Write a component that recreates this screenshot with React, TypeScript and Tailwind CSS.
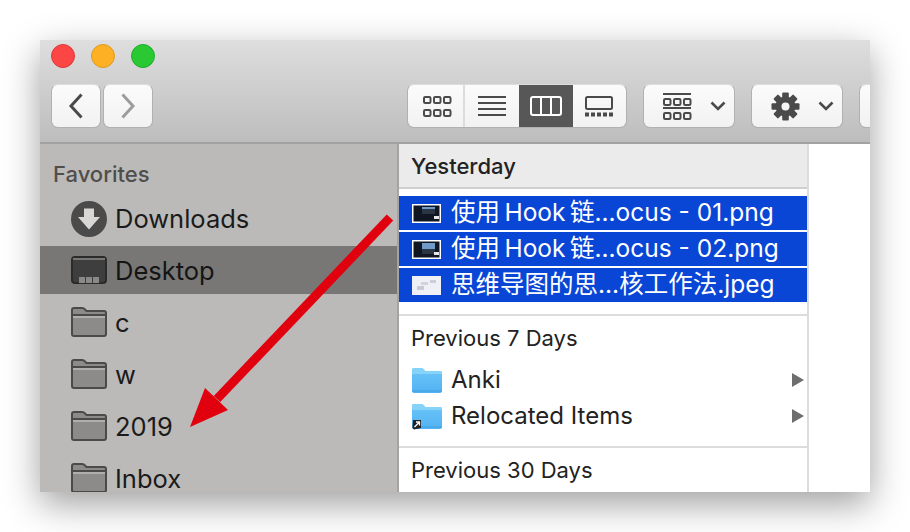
import React from "react";

function Light({ c, b }: { c: string; b: string }) {
  return <div className={`w-6 h-6 rounded-full border ${c} ${b}`} />;
}

function Chevron({ dir, color }: { dir: "l" | "r"; color: string }) {
  return (
    <svg width="20" height="28" viewBox="0 0 20 28" fill="none">
      <path d={dir === "l" ? "M15.5 2.5 L5 14 L15.5 25.5" : "M4.5 2.5 L15 14 L4.5 25.5"} stroke={color} strokeWidth="3" />
    </svg>
  );
}

function Down() {
  return (
    <svg width="16" height="10" viewBox="0 0 16 10" fill="none">
      <path d="M1.5 1.5 L8 8 L14.5 1.5" stroke="#4a4a4a" strokeWidth="2.6" />
    </svg>
  );
}

function SmallGrid({ y = 0 }: { y?: number }) {
  const xs = [0, 10, 20];
  return (
    <>
      {xs.map((x) => (
        <rect key={x} x={x + 1} y={y + 1} width="6.5" height="6" rx="1.2" fill="none" stroke="#4a4a4a" strokeWidth="2" />
      ))}
    </>
  );
}

function IconGrid() {
  return (
    <svg width="29" height="21" viewBox="0 0 29 21">
      <SmallGrid y={0} />
      <SmallGrid y={13} />
    </svg>
  );
}

function IconList() {
  return (
    <svg width="29" height="21" viewBox="0 0 29 21" fill="#4a4a4a">
      <rect y="0" width="28" height="2" />
      <rect y="6" width="28" height="2" />
      <rect y="12" width="28" height="2" />
      <rect y="18" width="28" height="2" />
    </svg>
  );
}

function IconColumns() {
  return (
    <svg width="33" height="21" viewBox="0 0 33 21" fill="none" stroke="#fff" strokeWidth="2">
      <rect x="1" y="1" width="30" height="18" rx="2" />
      <path d="M11 1 V19 M21 1 V19" />
    </svg>
  );
}

function IconGallery() {
  return (
    <svg width="29" height="21" viewBox="0 0 29 21">
      <rect x="1" y="1" width="26" height="12" rx="1.5" fill="none" stroke="#4a4a4a" strokeWidth="2" />
      {[0, 6, 12, 18, 24].map((x) => (
        <rect key={x} x={x} y="16.5" width="4" height="4" fill="#4a4a4a" />
      ))}
    </svg>
  );
}

function IconGroup() {
  return (
    <svg width="29" height="27" viewBox="0 0 29 27">
      <rect x="0" y="0" width="28" height="2" fill="#4a4a4a" />
      <g transform="translate(0 5)">
        <SmallGrid />
      </g>
      <rect x="0" y="14" width="28" height="2" fill="#4a4a4a" />
      <g transform="translate(0 19)">
        <SmallGrid />
      </g>
    </svg>
  );
}

function IconGear() {
  const teeth = [0, 45, 90, 135];
  return (
    <svg width="29" height="29" viewBox="0 0 29 29">
      {teeth.map((a) => (
        <rect key={a} x="11.2" y="0.5" width="6.6" height="28" rx="1" fill="#4a4a4a" transform={`rotate(${a} 14.5 14.5)`} />
      ))}
      <circle cx="14.5" cy="14.5" r="10" fill="#4a4a4a" />
      <circle cx="14.5" cy="14.5" r="4" fill="#f5f5f5" />
    </svg>
  );
}

function DownloadsIcon() {
  return (
    <svg width="36" height="36" viewBox="0 0 36 36">
      <circle cx="18" cy="18" r="18" fill="#4b4a4a" />
      <path d="M13 7.5 H23 V16 H29 L18 28.5 L7 16 H13 Z" fill="#d8d7d5" />
    </svg>
  );
}

function DesktopIcon() {
  return (
    <svg width="36" height="28" viewBox="0 0 36 28">
      <rect x="1" y="1" width="34" height="26" rx="3" fill="#3f3e3e" stroke="#2b2b2b" strokeWidth="2" />
      <rect x="2" y="2" width="32" height="2" fill="#777675" />
      <rect x="8" y="21" width="20" height="6" fill="#8a8988" />
      <path d="M14.5 21 V27 M21.5 21 V27" stroke="#3f3e3e" strokeWidth="1" />
    </svg>
  );
}

function SideFolder() {
  return (
    <svg className="-translate-y-[1px]" width="36" height="30" viewBox="0 0 36 30">
      <path
        d="M1 27 V3 Q1 1 3 1 H11 Q13 1 14 2.5 L15.5 4 H33 Q35 4 35 6 V27 Q35 29 33 29 H3 Q1 29 1 27 Z"
        fill="#8c8b89"
        stroke="#4b4a4a"
        strokeWidth="2"
      />
      <path d="M2 8 H34" stroke="#4b4a4a" strokeWidth="2" />
      <rect x="2" y="9" width="32" height="2" fill="#b0afad" />
    </svg>
  );
}

function BlueFolder({ alias }: { alias?: boolean }) {
  return (
    <div className="relative w-[30px] h-[25px]">
      <svg width="30" height="25" viewBox="0 0 30 25">
        <defs>
          <linearGradient id="bf" x1="0" y1="0" x2="0" y2="1">
            <stop offset="0" stopColor="#6cc6f8" />
            <stop offset="1" stopColor="#52b2f3" />
          </linearGradient>
        </defs>
        <path d="M0 23 V2 Q0 0 2 0 H9 Q11 0 12 1.5 L13 3 H28 Q30 3 30 5 V23 Q30 25 28 25 H2 Q0 25 0 23 Z" fill="url(#bf)" />
        <path d="M0 6 H30 V5 Q30 3 28 3 H13 L12 1.5 Q11 0 9 0 H2 Q0 0 0 2 Z" fill="#86d3fa" />
        <rect x="0" y="22.5" width="30" height="1" fill="#3f9fe0" />
      </svg>
      {alias && (
        <svg className="absolute left-0 top-[15px]" width="10" height="11" viewBox="0 0 10 11">
          <path d="M1 1 H9 V9 L2 10.5 L0.5 9 Z" fill="#222" />
          <path d="M2.5 8 L7 3.5 M4 3 H7.5 V6.5" stroke="#fff" strokeWidth="1.3" fill="none" />
        </svg>
      )}
    </div>
  );
}

function Thumb({ v }: { v: 0 | 1 | 2 }) {
  if (v === 2) {
    return (
      <svg width="29" height="21" viewBox="0 0 29 21">
        <rect width="29" height="19" y="1" fill="#eef0f5" />
        <rect x="5" y="11" width="7" height="4" fill="#c5cad4" />
        <rect x="9" y="7" width="7" height="3" fill="#d0d4dc" />
        <rect x="18" y="5" width="6" height="3" fill="#c9ced8" />
      </svg>
    );
  }
  return (
    <svg width="29" height="21" viewBox="0 0 29 21">
      <rect y="1" width="29" height="19" fill="#fff" />
      <rect x="1.5" y="2.5" width="26" height="16" fill="#101722" />
      <rect x="10" y="4" width="13" height={v === 0 ? 2 : 6} fill="#6f9ac9" />
      <rect x="10" y={v === 0 ? 6 : 10} width="13" height="5" fill="#2a3442" />
      <rect x="22" y="13" width="5" height="3" fill="#e6e6e6" />
    </svg>
  );
}

function SideRow({ icon, label, active }: { icon: React.ReactNode; label: string; active?: boolean }) {
  return (
    <div className={active ? "h-[48px] mt-[1px] mb-[3px] bg-[#787776] flex items-center pl-[31px]" : "h-[52px] flex items-center pl-[31px]"}>
      <div className="w-[36px] flex justify-center shrink-0">{icon}</div>
      <span className={active ? "ml-[9px] text-[25.5px] leading-none text-[#141414] -translate-x-[1px] translate-y-[1px]" : "ml-[9px] text-[25.5px] leading-none text-[#1b1b1b] -translate-x-[1px]"}>{label}</span>
    </div>
  );
}

function FileRow({ v, name }: { v: 0 | 1 | 2; name: string }) {
  return (
    <div className="h-[34px] bg-[#0a46d6] flex items-center pl-[13px] text-white">
      <Thumb v={v} />
      <span className="ml-[10px] text-[24.5px] leading-none whitespace-nowrap -translate-y-[1px]">{name}</span>
    </div>
  );
}

function FolderRow({ name, alias }: { name: string; alias?: boolean }) {
  return (
    <div className="h-[36px] flex items-center pl-[13px] pr-[3px]">
      <BlueFolder alias={alias} />
      <span className="ml-[9px] text-[24px] leading-none text-[#222] flex-1">{name}</span>
      <svg width="12" height="14" viewBox="0 0 12 14">
        <path d="M0 0 L12 7 L0 14 Z" fill="#6e6e6e" />
      </svg>
    </div>
  );
}

function ToolButton({ w, children }: { w: string; children: React.ReactNode }) {
  return (
    <div
      className={`${w} h-[44px] rounded-[7px] bg-gradient-to-b from-[#fbfbfb] to-[#f2f2f2] border border-[#b2b1b0] border-t-[#dedede] flex items-center shrink-0`}
    >
      {children}
    </div>
  );
}

export default function App() {
  return (
    <div
      className="relative w-[910px] h-[532px] overflow-hidden bg-white pt-[40px] pl-[40px]"
      style={{ fontFamily: '"Inter", "Noto Sans CJK SC", sans-serif' }}
    >
      <div className="w-[830px] h-[452px] overflow-hidden flex flex-col shadow-[0_12px_34px_rgba(0,0,0,0.38)]">
        {/* toolbar */}
        <div className="h-[104px] shrink-0 bg-gradient-to-b from-[#dedede] to-[#bdbdbd] border-b-2 border-[#a3a2a1] px-[11px] overflow-hidden">
          <div className="flex gap-[16px] h-[44px] items-start pt-[4px]">
            <Light c="bg-[#fc4545]" b="border-[#e0383a]" />
            <Light c="bg-[#fdb024]" b="border-[#e09a22]" />
            <Light c="bg-[#2ac833]" b="border-[#22ac2b]" />
          </div>
          <div className="flex h-[44px]">
            <div className="flex gap-[2px]">
              <ToolButton w="w-[50px] justify-center"><Chevron dir="l" color="#4a4a4a" /></ToolButton>
              <ToolButton w="w-[50px] justify-center"><Chevron dir="r" color="#9c9c9c" /></ToolButton>
            </div>
            <div className="ml-[254px] w-[220px] h-[44px] rounded-[7px] bg-gradient-to-b from-[#fbfbfb] to-[#f2f2f2] border border-[#b2b1b0] border-t-[#dedede] flex shrink-0 overflow-hidden">
              <div className="w-[57px] pl-[3px] border-r-2 border-[#dcdcdc] flex items-center justify-center"><IconGrid /></div>
              <div className="w-[54px] flex items-center justify-center"><IconList /></div>
              <div className="w-[54px] bg-[#575757] flex items-center justify-center"><IconColumns /></div>
              <div className="flex-1 flex items-center justify-center"><IconGallery /></div>
            </div>
            <div className="ml-[16px]">
              <ToolButton w="w-[92px] pl-[19px] gap-[18px]"><IconGroup /><Down /></ToolButton>
            </div>
            <div className="ml-[16px]">
              <ToolButton w="w-[92px] pl-[19px] gap-[18px]"><IconGear /><Down /></ToolButton>
            </div>
            <div className="ml-[16px]">
              <ToolButton w="w-[92px]"><span /></ToolButton>
            </div>
          </div>
        </div>

        <div className="flex flex-1 min-h-0">
          {/* sidebar */}
          <div className="w-[357px] shrink-0 bg-[#bcbab8] overflow-hidden">
            <div className="h-[49px] pl-[13px] pt-[19px] text-[22px] leading-none font-medium text-[#4f4e4d]">Favorites</div>
            <SideRow icon={<DownloadsIcon />} label="Downloads" />
            <SideRow icon={<DesktopIcon />} label="Desktop" active />
            <SideRow icon={<SideFolder />} label="c" />
            <SideRow icon={<SideFolder />} label="w" />
            <SideRow icon={<SideFolder />} label="2019" />
            <SideRow icon={<SideFolder />} label="Inbox" />
          </div>
          <div className="w-[2px] bg-[#a5a4a3] shrink-0" />
          {/* column */}
          <div className="w-[408px] shrink-0 bg-white overflow-hidden">
            <div className="h-[45px] pt-[1px] bg-[#ebebeb] border-b-2 border-[#cfcfcf] flex items-center pl-[12px] text-[22px] leading-none font-medium text-[#222]">Yesterday</div>
            <div className="pt-[7px] flex flex-col gap-[2px] pb-[12px] border-b-2 border-[#dcdcdc]">
              <FileRow v={0} name={"使用\u2009Hook\u2009链...ocus - 01.png"} />
              <FileRow v={1} name={"使用\u2009Hook\u2009链...ocus - 02.png"} />
              <FileRow v={2} name="思维导图的思...核工作法.jpeg" />
            </div>
            <div className="h-[44px] mb-[2px] flex items-center pl-[12px] text-[22px] leading-none text-[#222]">Previous 7 Days</div>
            <FolderRow name="Anki" />
            <FolderRow name="Relocated Items" alias />
            <div className="h-[14px] border-b-2 border-[#dcdcdc]" />
            <div className="h-[44px] flex items-center pl-[12px] text-[22px] leading-none text-[#222]">Previous 30 Days</div>
          </div>
          <div className="w-[2px] bg-[#dcdcdc] shrink-0" />
          <div className="flex-1 bg-white" />
        </div>
      </div>

      {/* annotation arrow */}
      <svg className="absolute left-0 top-0 pointer-events-none" width="910" height="532" viewBox="0 0 910 532">
        <path d="M390 217.5 L217 399" stroke="#e0000e" strokeWidth="9" fill="none" />
        <path d="M190 427 L205 388 L228 410 Z" fill="#e0000e" />
      </svg>
    </div>
  );
}
